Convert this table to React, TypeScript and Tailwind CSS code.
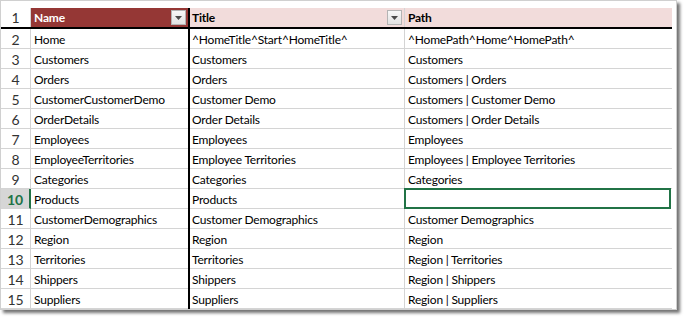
const rows = [
  ["Home", "^HomeTitle^Start^HomeTitle^", "^HomePath^Home^HomePath^"],
  ["Customers", "Customers", "Customers"],
  ["Orders", "Orders", "Customers | Orders"],
  ["CustomerCustomerDemo", "Customer Demo", "Customers | Customer Demo"],
  ["OrderDetails", "Order Details", "Customers | Order Details"],
  ["Employees", "Employees", "Employees"],
  ["EmployeeTerritories", "Employee Territories", "Employees | Employee Territories"],
  ["Categories", "Categories", "Categories"],
  ["Products", "Products", ""],
  ["CustomerDemographics", "Customer Demographics", "Customer Demographics"],
  ["Region", "Region", "Region"],
  ["Territories", "Territories", "Region | Territories"],
  ["Shippers", "Shippers", "Region | Shippers"],
  ["Suppliers", "Suppliers", "Region | Suppliers"],
]

const FilterButton = () => (
  <div className="w-[15px] h-[15px] mr-[2px] border border-[#b4b4b4] bg-gradient-to-b from-[#f8f8f8] to-[#e2e2e2] flex items-center justify-center">
    <svg width="7" height="4" viewBox="0 0 7 4">
      <path d="M0 0h7L3.5 4z" fill="#4a4a4a" />
    </svg>
  </div>
)

const App = () => {
  return (
    <div className="w-[684px] h-[320px] bg-white font-['Lato',sans-serif] text-[12px] tracking-[-0.2px] text-black">
      <div className="w-[677px] h-[310px] border border-[#d0d0d0] bg-white overflow-hidden shadow-[3px_3px_3px_rgba(0,0,0,0.55)] pt-[7px]">
        {/* header row */}
        <div className="flex h-[21px] border-b-2 border-black w-[671px]">
          <div className="w-[30px] shrink-0 flex items-center justify-center text-[14px] tracking-normal text-[#333] bg-white border-r border-[#d4d4d4]">1</div>
          <div className="w-[157px] shrink-0 flex items-center justify-between pl-[3px] bg-[#953735] text-white font-bold">
            <span>Name</span>
            <FilterButton />
          </div>
          <div className="w-[2px] shrink-0 bg-black" />
          <div className="w-[215px] shrink-0 flex items-center justify-between pl-[2px] bg-[#f2dcdb] font-bold border-r border-[#d4d4d4]">
            <span>Title</span>
            <FilterButton />
          </div>
          <div className="w-[267px] shrink-0 flex items-center pl-[3px] bg-[#f2dcdb] font-bold">
            <span>Path</span>
          </div>
        </div>
        {rows.map((r, i) => {
          const n = i + 2
          const sel = n === 10
          return (
            <div key={n} className="flex h-[20px] w-[671px]">
              <div
                className={
                  sel
                    ? "w-[30px] shrink-0 flex items-center justify-center pt-[2px] text-[14px] tracking-normal font-bold text-[#217346] bg-[#d6d6d6] border-r-2 border-[#217346] border-b border-b-[#d4d4d4]"
                    : "w-[30px] shrink-0 flex items-center justify-center pt-[2px] text-[14px] tracking-normal text-[#333] border-r border-b border-[#d4d4d4]"
                }
              >
                {n}
              </div>
              <div className="w-[157px] shrink-0 flex items-center pl-[3px] pt-[2px] border-b border-[#d4d4d4] whitespace-nowrap">{r[0]}</div>
              <div className="w-[2px] shrink-0 bg-black" />
              <div className="w-[215px] shrink-0 flex items-center pl-[2px] pt-[2px] border-r border-b border-[#d4d4d4] whitespace-nowrap">{r[1]}</div>
              <div
                className={
                  sel
                    ? "w-[267px] shrink-0 border-2 border-[#217346] -ml-[1px] h-[21px] -mt-[1px]"
                    : "w-[267px] shrink-0 flex items-center pl-[3px] pt-[2px] border-b border-[#d4d4d4] whitespace-nowrap"
                }
              >
                {r[2]}
              </div>
            </div>
          )
        })}
      </div>
    </div>
  )
}

export default App
